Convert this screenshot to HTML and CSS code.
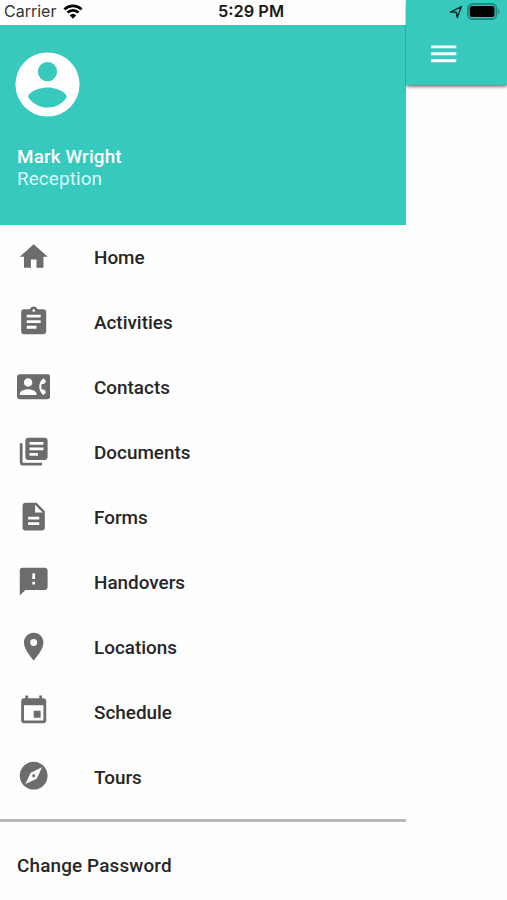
FILE: index.html
```html
<!DOCTYPE html>
<html lang="en">
  <head>
    <meta charset="UTF-8" />
    <meta name="viewport" content="width=device-width, initial-scale=1.0" />
    <title>Menu</title>
    <link rel="stylesheet" href="styles.css">
  </head>
  <body>
    <aside class="drawer">
      <div class="status-bar">
        <span class="carrier">Carrier</span>
        <svg class="wifi" viewBox="0 0 20 15">
          <path d="M1.4 5.4a12.4 12.4 0 0 1 17.2 0M4.5 8.6a8 8 0 0 1 11 0" fill="none" stroke="#000" stroke-width="2.7" />
          <path d="M10 14.8 6.7 11.2a4.8 4.8 0 0 1 6.6 0z" />
        </svg>
        <span class="time">5:29 PM</span>
      </div>

      <header class="profile">
        <svg class="avatar" viewBox="0 0 24 24">
          <path fill-rule="evenodd" d="M12 2a10 10 0 1 0 0 20 10 10 0 0 0 0-20zm0 3a3 3 0 1 1 0 6 3 3 0 0 1 0-6zm0 14.2c-2.5 0-4.71-1.28-6-3.22.03-1.99 4-3.08 6-3.08s5.97 1.09 6 3.08a7.2 7.2 0 0 1-6 3.22z" />
        </svg>
        <div class="name">Mark Wright</div>
        <div class="role">Reception</div>
      </header>

      <nav class="menu">
        <a class="menu-item">
          <svg viewBox="0 0 24 24"><path d="M10 20v-6h4v6h5v-8h3L12 3 2 12h3v8z" /></svg>
          <span>Home</span>
        </a>
        <a class="menu-item">
          <svg viewBox="0 0 24 24"><path d="M19 3h-4.180C14.400 1.840 13.300 1 12 1c-1.300 0-2.400.84-2.820 2H5c-1.100 0-2 .9-2 2v14c0 1.100.9 2 2 2h14c1.100 0 2-.9 2-2V5c0-1.100-.9-2-2-2zm-7 0c.55 0 1 .45 1 1s-.45 1-1 1-1-.45-1-1 .45-1 1-1zm2 14H7v-2h7v2zm3-4H7v-2h10v2zm0-4H7V7h10v2z" /></svg>
          <span>Activities</span>
        </a>
        <a class="menu-item">
          <svg viewBox="0 0 24 24"><path d="M22 3H2C.9 3 0 3.900 0 5v14c0 1.100.9 2 2 2h20c1.100 0 1.990-.9 1.990-2L24 5c0-1.100-.9-2-2-2zM8 6c1.660 0 3 1.340 3 3s-1.340 3-3 3-3-1.340-3-3 1.340-3 3-3zm6 12H2v-1c0-2 4-3.100 6-3.100s6 1.100 6 3.100v1zm3.850-4h1.640L21 16l-1.990 1.990c-1.310-.98-2.280-2.380-2.730-3.990-.18-.64-.28-1.310-.28-2s.1-1.360.28-2c.45-1.620 1.420-3.010 2.730-3.990L21 8l-1.510 2h-1.640c-.22.63-.35 1.300-.35 2s.13 1.370.35 2z" /></svg>
          <span>Contacts</span>
        </a>
        <a class="menu-item">
          <svg viewBox="0 0 24 24"><path d="M4 6H2v14c0 1.100.9 2 2 2h14v-2H4V6zm16-4H8c-1.100 0-2 .9-2 2v12c0 1.100.9 2 2 2h12c1.100 0 2-.9 2-2V4c0-1.100-.9-2-2-2zm-1 9H9V9h10v2zm-4 4H9v-2h6v2zm4-8H9V5h10v2z" /></svg>
          <span>Documents</span>
        </a>
        <a class="menu-item">
          <svg viewBox="0 0 24 24"><path d="M14 2H6c-1.100 0-1.990.9-1.990 2L4 20c0 1.100.89 2 1.990 2H18c1.100 0 2-.9 2-2V8l-6-6zm2 16H8v-2h8v2zm0-4H8v-2h8v2zm-3-5V3.500L18.500 9H13z" /></svg>
          <span>Forms</span>
        </a>
        <a class="menu-item">
          <svg viewBox="0 0 24 24"><path d="M20 2H4c-1.100 0-1.990.9-1.990 2L2 22l4-4h14c1.100 0 2-.9 2-2V4c0-1.100-.9-2-2-2zm-7 12h-2v-2h2v2zm0-4h-2V6h2v4z" /></svg>
          <span>Handovers</span>
        </a>
        <a class="menu-item">
          <svg viewBox="0 0 24 24"><path d="M12 2C8.130 2 5 5.130 5 9c0 5.250 7 13 7 13s7-7.750 7-13c0-3.870-3.130-7-7-7zm0 9.500a2.500 2.500 0 0 1 0-5 2.500 2.500 0 0 1 0 5z" /></svg>
          <span>Locations</span>
        </a>
        <a class="menu-item">
          <svg viewBox="0 0 24 24"><path d="M17 12h-5v5h5v-5zM16 1v2H8V1H6v2H5c-1.110 0-1.990.9-1.990 2L3 19c0 1.100.89 2 2 2h14c1.100 0 2-.9 2-2V5c0-1.100-.9-2-2-2h-1V1h-2zm3 18H5V8h14v11z" /></svg>
          <span>Schedule</span>
        </a>
        <a class="menu-item">
          <svg viewBox="0 0 24 24"><path d="M12 10.900c-.61 0-1.100.49-1.100 1.100s.49 1.100 1.100 1.100c.61 0 1.100-.49 1.100-1.100s-.49-1.100-1.100-1.100zM12 2C6.480 2 2 6.480 2 12s4.480 10 10 10 10-4.480 10-10S17.520 2 12 2zm2.190 12.190L6 18l3.810-8.190L18 6l-3.810 8.190z" /></svg>
          <span>Tours</span>
        </a>
      </nav>

      <a class="change-password">Change Password</a>
    </aside>

    <main class="page">
      <header class="app-bar">
        <div class="status-icons">
          <svg class="location" viewBox="0 0 14 14">
            <path d="M1.300 7.100 12.400 1.600 8.200 12.500 7.300 7.300z" fill="none" stroke="#08302d" stroke-width="1.500" stroke-linejoin="round" />
          </svg>
          <svg class="battery" viewBox="0 0 34 17">
            <rect x="1" y="1" width="28.400" height="15" rx="4.500" fill="none" stroke="#1f8880" stroke-width="1.800" />
            <rect x="2.700" y="2.900" width="24.800" height="11.200" rx="2.400" />
            <path d="M31 6a3 3 0 0 1 0 5z" fill="#1f8880" />
          </svg>
        </div>
        <svg class="hamburger" viewBox="0 0 24 24"><path d="M3 18h18v-2H3v2zm0-5h18v-2H3v2zm0-7v2h18V6H3z" /></svg>
      </header>
    </main>
  </body>
</html>
```
FILE: styles.css
```css
* {
  margin: 0;
  padding: 0;
  box-sizing: border-box;
}

body {
  display: flex;
  height: 900px;
  overflow: hidden;
  background-color: #fefefe;
  color: #262626;
  font-family: Roboto, sans-serif;
  font-size: 18.9px;
  font-weight: 500;
}

svg {
  display: block;
  flex-shrink: 0;
}

.drawer {
  width: 405.5px;
  flex-shrink: 0;
}

.status-bar {
  display: flex;
  align-items: center;
  height: 25px;
  padding: 0 0 2px 4px;
  font-family: Inter, sans-serif;
  font-size: 16px;
  line-height: 23px;
  white-space: nowrap;
}

.carrier {
  width: 53px;
  font-weight: 400;
  color: #333;
}

.wifi {
  width: 20px;
  height: 15px;
  margin-left: 6px;
}

.time {
  margin-left: 135px;
  font-size: 16.4px;
  font-weight: 600;
  color: #1a1a1a;
}

.profile {
  height: 199.5px;
  padding: 21px 17px 0;
  background-color: #37c8be;
  color: #fff;
  line-height: 22px;
}

.avatar {
  width: 77px;
  height: 77px;
  margin: 0 0 23px -8.5px;
  fill: #fff;
}

.name {
  letter-spacing: 0.12px;
}

.role {
  font-weight: 400;
  letter-spacing: 0.1px;
  color: #d8fffb;
}

.menu {
  border-bottom: 3px solid #b9b9b9;
}

.menu-item {
  display: flex;
  align-items: center;
  height: 64.9px;
  padding-left: 17px;
}

.menu-item:last-child {
  height: 75.5px;
  padding-bottom: 10.5px;
}

.menu-item svg {
  width: 33.4px;
  height: 33.4px;
  margin-right: 43.6px;
  fill: #6c6c6c;
}

.menu-item span {
  padding-top: 2px;
}

.change-password {
  display: block;
  padding: 33px 17px 0;
  line-height: 22px;
  letter-spacing: 0.15px;
}

.page {
  flex: 1;
}

.app-bar {
  height: 85px;
  background-color: #37c8be;
  box-shadow: 0 1px 4px rgba(0, 0, 0, 0.75);
  clip-path: inset(0 0 -10px 0);
}

.status-icons {
  display: flex;
  align-items: flex-start;
  gap: 4px;
  height: 37px;
  padding: 3px 0 0 43px;
}

.location {
  width: 14px;
  height: 14px;
  margin-top: 2px;
}

.battery {
  width: 34px;
  height: 17px;
}

.hamburger {
  width: 33.5px;
  height: 33.5px;
  margin-left: 21px;
  fill: #fff;
}
```
